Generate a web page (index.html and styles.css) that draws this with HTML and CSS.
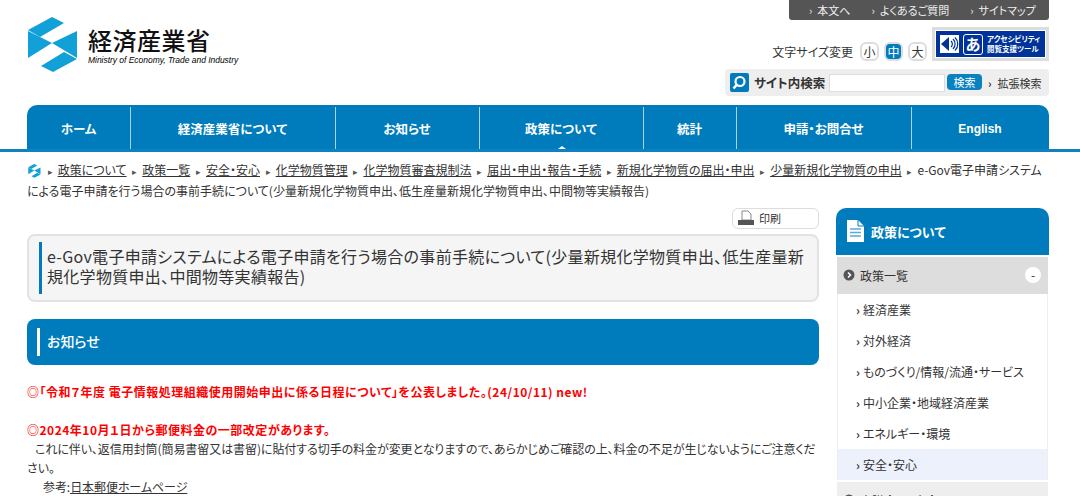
FILE: index.html
```html
<!DOCTYPE html>
<html lang="ja">
<head>
  <meta charset="UTF-8" />
  <title>e-Gov電子申請システムによる電子申請を行う場合の事前手続について</title>
  <link rel="stylesheet" href="styles.css">
</head>
<body>
  <header class="site-header">
    <a class="logo">
      <svg class="logo-mark" viewBox="0 0 50 56" width="50" height="56">
        <polygon points="24,0 36,6 12,20 0,13" fill="#12a0d8"/>
        <polygon points="0,14 24,26 0,41" fill="#12a0d8"/>
        <polygon points="49,14 49,41 24,26" fill="#12a0d8"/>
        <polygon points="13,49 25,55 49,42 36,35" fill="#12a0d8"/>
      </svg>
      <div class="logo-text">
        <div class="logo-ja">経済産業省</div>
        <div class="logo-en">Ministry of Economy, Trade and Industry</div>
      </div>
    </a>
    <div class="header-right">
      <ul class="util-bar">
        <li>本文へ</li>
        <li>よくあるご質問</li>
        <li>サイトマップ</li>
      </ul>
      <div class="size-row">
        <span class="size-label">文字サイズ変更</span>
        <span class="size-btn">小</span>
        <span class="size-btn active">中</span>
        <span class="size-btn">大</span>
        <div class="access-banner">
          <div class="access-inner">
            <svg width="19" height="20" viewBox="0 0 19 20">
              <rect x="0" y="1" width="19" height="18" fill="#fff"/>
              <polygon points="1,10 9,3 9,17" fill="#003399"/>
              <path d="M11 7a4 4 0 0 1 0 6M13 5a7 7 0 0 1 0 10M15 3.500a9 9 0 0 1 0 13" fill="none" stroke="#003399" stroke-width="1.200"/>
            </svg>
            <span class="access-o">あ</span>
            <span class="access-text">アクセシビリティ<br>閲覧支援ツール</span>
          </div>
        </div>
      </div>
      <form class="search-row">
        <svg class="search-icon" width="19" height="19" viewBox="0 0 19 19">
          <rect width="19" height="19" rx="2" fill="#007bbb"/>
          <circle cx="10" cy="8.500" r="4.500" fill="none" stroke="#fff" stroke-width="2.200"/>
          <line x1="6.500" y1="12" x2="3.500" y2="15.500" stroke="#fff" stroke-width="2.600"/>
        </svg>
        <span class="search-label">サイト内検索</span>
        <input class="search-input" type="text" />
        <button class="search-btn" type="button">検索</button>
        <span class="search-more">拡張検索</span>
      </form>
    </div>
  </header>

  <nav class="global-nav">
    <a>ホーム</a>
    <a>経済産業省について</a>
    <a>お知らせ</a>
    <a class="current">政策について</a>
    <a>統計</a>
    <a>申請・お問合せ</a>
    <a class="nav-en">English</a>
  </nav>

  <div class="breadcrumb">
    <svg class="crumb-logo" viewBox="0 0 50 56" width="13" height="14">
      <polygon points="24,0 36,6 12,20 0,13" fill="#12a0d8"/>
      <polygon points="0,14 24,26 0,41" fill="#12a0d8"/>
      <polygon points="49,14 49,41 24,26" fill="#12a0d8"/>
      <polygon points="13,49 25,55 49,42 36,35" fill="#12a0d8"/>
    </svg>
    <span class="crumb-sep">▸</span><a>政策について</a>
    <span class="crumb-sep">▸</span><a>政策一覧</a>
    <span class="crumb-sep">▸</span><a>安全・安心</a>
    <span class="crumb-sep">▸</span><a>化学物質管理</a>
    <span class="crumb-sep">▸</span><a>化学物質審査規制法</a>
    <span class="crumb-sep">▸</span><a>届出・申出・報告・手続</a>
    <span class="crumb-sep">▸</span><a>新規化学物質の届出・申出</a>
    <span class="crumb-sep">▸</span><a>少量新規化学物質の申出</a>
    <span class="crumb-sep">▸</span>e-Gov電子申請システムによる電子申請を行う場合の事前手続について(少量新規化学物質申出、低生産量新規化学物質申出、中間物等実績報告)
  </div>

  <div class="columns">
    <main class="main-col">
      <div class="print-row">
        <a class="print-btn">
          <svg width="18" height="16" viewBox="0 0 18 16">
            <path d="M5 1h6l3 3v6H5z" fill="#fff" stroke="#888"/>
            <rect x="1" y="10" width="16" height="5" fill="#555"/>
          </svg>
          印刷
        </a>
      </div>
      <div class="page-title"><h1>e-Gov電子申請システムによる電子申請を行う場合の事前手続について(少量新規化学物質申出、低生産量新規化学物質申出、中間物等実績報告)</h1></div>
      <div class="section-head"><h2>お知らせ</h2></div>
      <p class="notice first">◎「令和７年度 電子情報処理組織使用開始申出に係る日程について」を公表しました。(24/10/11) new!</p>
      <p class="notice">◎2024年10月１日から郵便料金の一部改定があります。</p>
      <p class="body-text indent-1">これに伴い、返信用封筒(簡易書留又は書留)に貼付する切手の料金が変更となりますので、あらかじめご確認の上、料金の不足が生じないようにご注意ください。</p>
      <p class="body-text indent-2">参考:<a>日本郵便ホームページ</a></p>
    </main>

    <aside class="side-col">
      <div class="side-head">
        <svg width="18" height="22" viewBox="0 0 18 22">
          <path d="M1 0h11l6 6v16H1z" fill="#fff"/>
          <path d="M12 0v6h6" fill="none" stroke="#007bbb"/>
          <path d="M4 9h11M4 12.500h11M4 16h11" stroke="#5aaad6" stroke-width="1.500"/>
        </svg>
        政策について
      </div>
      <div class="side-group open">
        <svg width="12" height="12" viewBox="0 0 12 12">
          <circle cx="6" cy="6" r="5.500" fill="#555"/>
          <path d="M5 3.500 7.500 6 5 8.500" fill="none" stroke="#fff" stroke-width="1.500"/>
        </svg>
        <span>政策一覧</span>
        <i class="toggle">-</i>
      </div>
      <ul class="side-list">
        <li>経済産業</li>
        <li>対外経済</li>
        <li>ものづくり/情報/流通・サービス</li>
        <li>中小企業・地域経済産業</li>
        <li>エネルギー・環境</li>
        <li class="current">安全・安心</li>
      </ul>
      <div class="side-group">
        <svg width="12" height="12" viewBox="0 0 12 12">
          <circle cx="6" cy="6" r="5.500" fill="#555"/>
        </svg>
        <span>審議会・研究会</span>
      </div>
    </aside>
  </div>
</body>
</html>
```

FILE: styles.css
```css
html, body {
  margin: 0;
  padding: 0;
  height: 496px;
  overflow: hidden;
}
body {
  font-family: "Noto Sans CJK JP", "Liberation Sans", sans-serif;
  font-size: 12px;
  color: #333;
  background: #fff;
  font-feature-settings: "palt";
}
ul {
  list-style: none;
  margin: 0;
  padding: 0;
}

/* header */
.site-header {
  display: flex;
  justify-content: space-between;
  height: 105px;
  padding: 0 31px 0 28px;
}
.logo {
  display: flex;
  gap: 10px;
  padding-top: 17px;
  align-items: flex-start;
}
.logo-text {
  padding-top: 8px;
  color: #111;
}
.logo-ja {
  font-size: 24px;
  line-height: 30px;
  font-weight: 500;
  letter-spacing: 0.500px;
  font-feature-settings: normal;
}
.logo-en {
  font-family: "Liberation Sans", sans-serif;
  font-size: 8.500px;
  line-height: 11px;
  font-style: italic;
  letter-spacing: -0.030px;
  color: #000;
}
.header-right {
  display: flex;
  flex-direction: column;
  align-items: flex-end;
}
.util-bar {
  display: flex;
  align-items: center;
  width: 260px;
  height: 20px;
  box-sizing: border-box;
  padding-left: 20px;
  gap: 21px;
  background: #555;
  border-radius: 0 0 3px 3px;
  color: #eee;
  font-size: 11px;
}
.util-bar li::before {
  content: "›";
  margin-right: 5px;
}
.size-row {
  display: flex;
  align-items: flex-end;
  height: 34px;
  margin-top: 7px;
}
.size-label {
  font-size: 12px;
  line-height: 19px;
  margin-right: 7px;
}
.size-btn {
  box-sizing: border-box;
  width: 19px;
  height: 19px;
  margin-right: 5px;
  border: 2px solid #ddd;
  border-radius: 6px;
  text-align: center;
  font-size: 12px;
  line-height: 15px;
}
.size-btn.active {
  background: #007bbb;
  color: #fff;
}
.access-banner {
  box-sizing: border-box;
  width: 117px;
  height: 34px;
  border: 3px solid #ddd;
  padding: 1px;
}
.access-inner {
  display: flex;
  align-items: center;
  gap: 4px;
  height: 100%;
  padding-left: 4px;
  background: #003399;
  color: #fff;
}
.access-o {
  box-sizing: border-box;
  width: 20px;
  height: 21px;
  border: 1px solid #fff;
  border-radius: 3px;
  text-align: center;
  font-size: 15px;
  line-height: 18px;
  font-weight: bold;
}
.access-text {
  font-size: 7.500px;
  line-height: 10px;
  font-weight: bold;
  white-space: nowrap;
}
.search-row {
  display: flex;
  align-items: center;
  width: 324px;
  height: 27px;
  box-sizing: border-box;
  margin: 8px 0 0;
  padding-left: 5px;
  background: #eee;
  border-radius: 4px;
}
.search-label {
  font-weight: bold;
  font-size: 12.500px;
  margin-left: 5px;
  width: 75px;
  white-space: nowrap;
}
.search-input {
  box-sizing: border-box;
  width: 116px;
  height: 18px;
  border: 1px solid #ddd;
  padding: 0;
  background: #fff;
}
.search-btn {
  width: 35px;
  height: 16px;
  margin: 0 6px 2px 2px;
  padding: 0;
  border: none;
  border-radius: 4px;
  background: #0a82c0;
  color: #fff;
  font: 11px/16px "Noto Sans CJK JP", sans-serif;
}
.search-more {
  font-size: 11px;
  white-space: nowrap;
}
.search-more::before {
  content: "›";
  margin-right: 6px;
  font-weight: bold;
}

/* global nav */
.global-nav {
  display: grid;
  grid-template-columns: 103px 205px 144px 164px 93px 175px 138px;
  height: 44px;
  margin: 0 31px 0 27px;
  background: #007bbb;
  border-radius: 10px 10px 0 0;
  position: relative;
}
.global-nav::after {
  content: "";
  position: absolute;
  left: -27px;
  right: -31px;
  bottom: -3px;
  height: 3px;
  background: #0f80c0;
}
.global-nav a {
  display: flex;
  align-items: center;
  justify-content: center;
  position: relative;
  color: #fff;
  font-size: 12.500px;
  font-weight: bold;
  padding-top: 3px;
  box-sizing: border-box;
}
.global-nav a.nav-en {
  font-family: "Liberation Sans", sans-serif;
  font-size: 12px;
}
.global-nav a + a::before {
  content: "";
  position: absolute;
  left: 0;
  top: 2px;
  bottom: 0;
  width: 1px;
  background: #a9d3ea;
}
.global-nav a.current::after {
  content: "";
  position: absolute;
  left: 79px;
  bottom: 0;
  border: 4px solid transparent;
  border-top: 0;
  border-bottom: 3px solid #fff;
}

/* breadcrumb */
.breadcrumb {
  margin: 10px 31px 0 27px;
  padding-top: 1px;
  height: 48px;
  line-height: 19px;
  font-size: 12px;
}
.crumb-logo {
  vertical-align: -3px;
  margin: 0 1px;
}
.crumb-sep {
  font-size: 9px;
  margin: 0 5px 0 3px;
  color: #555;
}
.breadcrumb a {
  text-decoration: underline;
}

/* columns */
.columns {
  display: flex;
  gap: 17px;
  padding: 0 31px 0 27px;
}
.main-col {
  width: 792px;
}
.side-col {
  width: 213px;
}

.print-row {
  display: flex;
  justify-content: flex-end;
}
.print-btn {
  display: flex;
  align-items: center;
  gap: 4px;
  box-sizing: border-box;
  width: 87px;
  height: 21px;
  padding: 0 0 1px 4px;
  border: 1px solid #ddd;
  border-radius: 6px;
  font-size: 11px;
}
.page-title {
  box-sizing: border-box;
  margin-top: 5px;
  height: 68px;
  padding: 6px 12px 6px 10px;
  background: #f5f5f5;
  border: 2px solid #e2e2e2;
  border-radius: 8px;
}
.page-title h1 {
  margin: 0;
  padding: 4px 0 0 5px;
  height: 52px;
  box-sizing: border-box;
  border-left: 3px solid #007bbb;
  font-size: 16px;
  line-height: 20px;
  font-weight: 400;
  letter-spacing: 0.300px;
}
.section-head {
  box-sizing: border-box;
  height: 46px;
  margin-top: 17px;
  padding: 9px 10px;
  background: #007bbb;
  border-radius: 8px;
}
.section-head h2 {
  margin: 0;
  height: 28px;
  padding-left: 7px;
  border-left: 3px solid #fff;
  color: #fff;
  font-size: 14px;
  line-height: 26px;
  font-weight: 500;
}
.notice {
  margin: 19px 0 0;
  color: #f00;
  font-weight: bold;
  line-height: 19px;
  letter-spacing: 0.500px;
}
.notice.first {
  margin-top: 17px;
}
.body-text {
  margin: 0;
  line-height: 19px;
  letter-spacing: -0.070px;
}
.indent-1 {
  text-indent: 8px;
}
.indent-2 {
  text-indent: 16px;
}
.body-text a {
  text-decoration: underline;
}

/* side menu */
.side-head {
  display: flex;
  align-items: center;
  gap: 7px;
  box-sizing: border-box;
  height: 47px;
  padding: 0 0 1px 10px;
  background: #007bbb;
  border-radius: 10px 10px 0 0;
  color: #fff;
  font-size: 13px;
  font-weight: bold;
}
.side-group {
  display: flex;
  align-items: center;
  gap: 5px;
  box-sizing: border-box;
  height: 37px;
  margin: 2px 1px 0;
  padding: 0 0 1px 6px;
  background: #eee;
}
.side-group.open {
  background: #ddd;
}
.side-group span {
  flex: 1;
}
.toggle {
  width: 16px;
  height: 16px;
  margin-right: 7px;
  border-radius: 50%;
  background: #fff;
  text-align: center;
  font-style: normal;
  line-height: 15px;
}
.side-list {
  margin: 0 1px;
  border-left: 1px solid #eee;
  border-right: 1px solid #eee;
}
.side-list li {
  height: 31px;
  padding-left: 18px;
  line-height: 31px;
  white-space: nowrap;
}
.side-list li::before {
  content: "›";
  font-weight: bold;
  margin-right: 3px;
}
.side-list li.current {
  background: #edf1fb;
}
```
